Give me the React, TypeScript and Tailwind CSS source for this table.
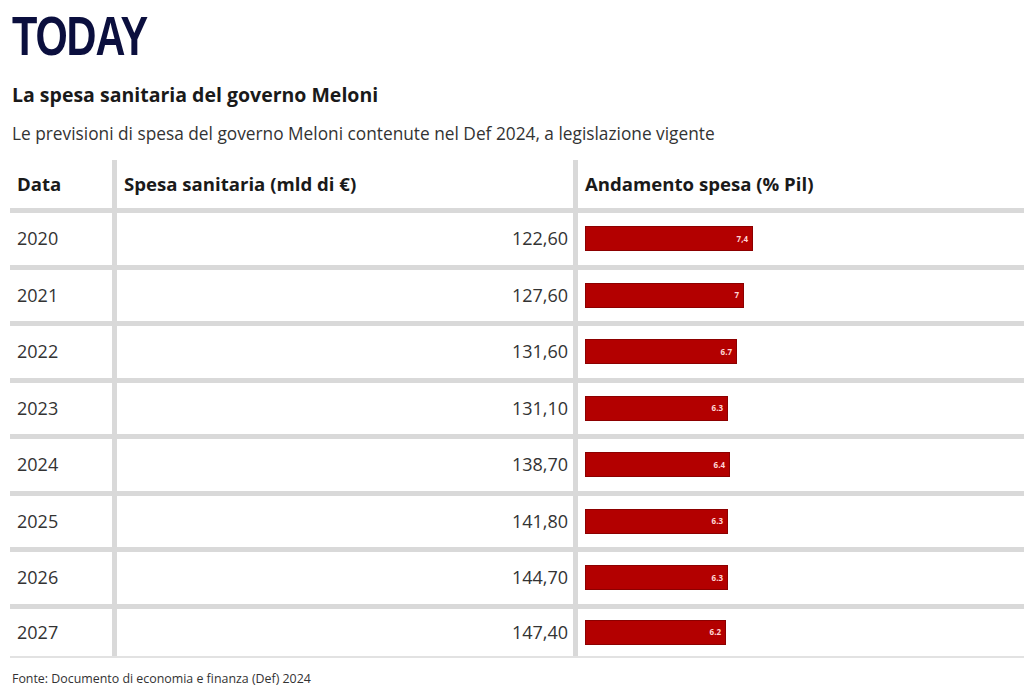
import React from "react";

const rows = [
  { y: "2020", v: "122,60", p: 7.4, l: "7,4" },
  { y: "2021", v: "127,60", p: 7, l: "7" },
  { y: "2022", v: "131,60", p: 6.7, l: "6.7" },
  { y: "2023", v: "131,10", p: 6.3, l: "6.3" },
  { y: "2024", v: "138,70", p: 6.4, l: "6.4" },
  { y: "2025", v: "141,80", p: 6.3, l: "6.3" },
  { y: "2026", v: "144,70", p: 6.3, l: "6.3" },
  { y: "2027", v: "147,40", p: 6.2, l: "6.2" },
];

export default function App() {
  return (
    <div className="w-[1024px] h-[700px] bg-white overflow-hidden font-['Open_Sans',sans-serif] text-[#333]">
      <div className="h-[70px] pt-[8px] pl-[12px]">
        <div className="inline-block origin-left scale-x-[0.74] font-['Liberation_Sans',sans-serif] font-bold text-[56px] leading-[56px] tracking-[-1.5px] text-[#0b0f3e]">
          TODAY
        </div>
      </div>
      <div className="h-[50px] pl-[12px] leading-[50px] text-[19.5px] font-bold text-[#1a1a1a]">
        La spesa sanitaria del governo Meloni
      </div>
      <div className="h-[28px] pl-[12px] leading-[28px] text-[17.3px] text-[#333]">
        Le previsioni di spesa del governo Meloni contenute nel Def 2024, a legislazione vigente
      </div>
      <div className="mt-[12px] ml-[10px] w-[1014px]">
        <div className="flex h-[48px] items-center text-[18.6px] font-bold text-[#1a1a1a]">
          <div className="w-[102px] h-full flex items-center pl-[7px]">Data</div>
          <div className="w-[461px] h-full flex items-center pl-[7px] border-l-[5px] border-[#d9d9d9]">
            Spesa sanitaria (mld di €)
          </div>
          <div className="flex-1 h-full flex items-center pl-[7px] border-l-[5px] border-[#d9d9d9]">
            Andamento spesa (% Pil)
          </div>
        </div>
        {rows.map((r, i) => {
          const last = i === rows.length - 1;
          return (
            <div
              key={r.y}
              className={
                last
                  ? "flex h-[54.5px] border-t-[5px] border-b-[2px] border-t-[#d9d9d9] border-b-[#e2e2e2] text-[18px]"
                  : "flex h-[56.5px] border-t-[5px] border-[#d9d9d9] text-[18px]"
              }
            >
              <div className="w-[102px] h-full flex items-center pl-[7px]">{r.y}</div>
              <div className="w-[461px] h-full flex items-center justify-end pr-[5px] border-l-[5px] border-[#d9d9d9]">
                {r.v}
              </div>
              <div className="flex-1 h-full flex items-center pl-[7px] border-l-[5px] border-[#d9d9d9]">
                <div
                  className="h-[25px] bg-[#b30000] border border-[#8c0000] flex items-center justify-end pr-[4px]"
                  style={{ width: `${Math.round(r.p * 22.7)}px` }}
                >
                  <span className="text-[8px] font-bold text-[#ffd6d6] leading-none">{r.l}</span>
                </div>
              </div>
            </div>
          );
        })}
      </div>
      <div className="h-[42px] pl-[12px] leading-[42px] text-[12.4px] text-[#333]">
        Fonte: Documento di economia e finanza (Def) 2024
      </div>
    </div>
  );
}
